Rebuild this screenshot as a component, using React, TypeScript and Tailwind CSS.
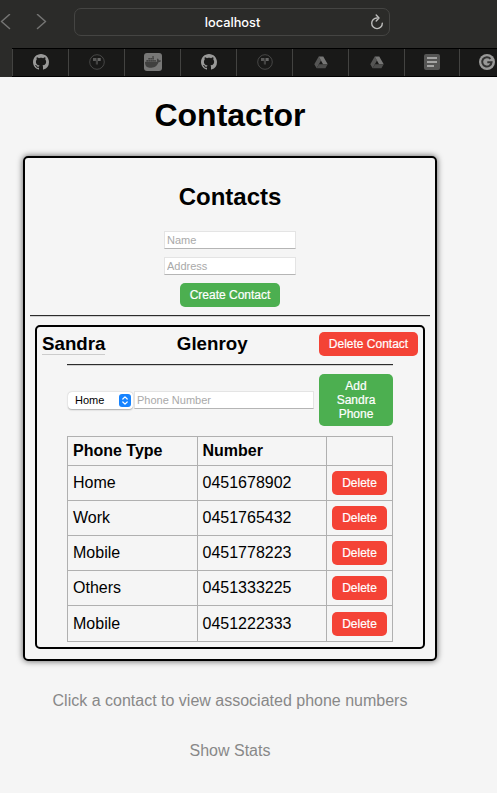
import React from "react";
import { SiDocker } from "react-icons/si";

const phones = [
  { type: "Home", number: "0451678902" },
  { type: "Work", number: "0451765432" },
  { type: "Mobile", number: "0451778223" },
  { type: "Others", number: "0451333225" },
  { type: "Mobile", number: "0451222333" },
];

function GithubIcon() {
  return (
    <svg width="16" height="16" viewBox="0 0 16 16" fill="#999998">
      <path d="M8 0C3.58 0 0 3.58 0 8c0 3.54 2.29 6.53 5.47 7.59.4.07.55-.17.55-.38 0-.19-.01-.82-.01-1.49-2.01.37-2.53-.49-2.69-.94-.09-.23-.48-.94-.82-1.13-.28-.15-.68-.52-.01-.53.63-.01 1.08.58 1.23.82.72 1.21 1.87.87 2.33.66.07-.52.28-.87.51-1.07-1.78-.2-3.64-.89-3.64-3.95 0-.87.31-1.59.82-2.15-.08-.2-.36-1.02.08-2.12 0 0 .67-.21 2.2.82.64-.18 1.32-.27 2-.27s1.36.09 2 .27c1.53-1.04 2.2-.82 2.2-.82.44 1.1.16 1.92.08 2.12.51.56.82 1.27.82 2.15 0 3.07-1.87 3.75-3.65 3.95.29.25.54.73.54 1.48 0 1.07-.01 1.93-.01 2.2 0 .21.15.46.55.38A8.01 8.01 0 0 0 16 8c0-4.42-3.58-8-8-8z" />
    </svg>
  );
}

function RingIcon() {
  return (
    <svg width="16" height="16" viewBox="0 0 16 16" fill="none">
      <circle cx="8" cy="8" r="7.300" stroke="#4c4c4b" strokeWidth="0.900" />
      <rect x="4" y="4" width="3.500" height="3" fill="#585857" />
      <rect x="8.500" y="4" width="3.200" height="3" fill="#666665" />
      <rect x="6.800" y="6" width="2.200" height="4.500" fill="#444443" />
    </svg>
  );
}

function DockerIcon() {
  return (
    <div className="flex h-[18px] w-[18px] items-center justify-center rounded-[3px] bg-[#777776]">
      <SiDocker size={16} color="#40403f" />
    </div>
  );
}

function DriveIcon() {
  return (
    <svg width="14" height="13" viewBox="0 0 14 13">
      <path d="M4.700 0.500L0.300 8.200L2.600 12.300L7 4.500z" fill="#555554" />
      <path d="M4.700 0.500H9.300L13.700 8.200H9.100z" fill="#777776" />
      <path d="M5 8.200H13.700L11.400 12.300H2.600z" fill="#4c4c4b" />
    </svg>
  );
}

function DocIcon() {
  return (
    <svg width="16" height="16" viewBox="0 0 16 16">
      <rect width="16" height="16" rx="2" fill="#555554" />
      <path d="M3 4h10M3 8h10M3 12h7" stroke="#a4a4a3" strokeWidth="1.800" />
    </svg>
  );
}

function GIcon() {
  return (
    <svg width="16" height="16" viewBox="0 0 16 16" fill="none">
      <circle cx="8" cy="8" r="8" fill="#999998" />
      <path d="M11.500 4.800A4.700 4.700 0 1 0 12.600 8.200H8.300" stroke="#333332" strokeWidth="2" />
    </svg>
  );
}

const tabs = [GithubIcon, RingIcon, DockerIcon, GithubIcon, RingIcon, DriveIcon, DriveIcon, DocIcon];

function Chevron({ d }: { d: string }) {
  return (
    <svg width="11" height="16" viewBox="0 0 11 16" fill="none" stroke="#747473" strokeWidth="1.500" strokeLinecap="round" strokeLinejoin="round">
      <path d={d} />
    </svg>
  );
}

function Browser() {
  return (
    <header className="h-[77px] bg-[#2b2b29]">
      <div className="flex h-12">
        <div className="flex w-[74px] gap-[25px] pt-[14px]">
          <Chevron d="M9.500 0.500L1.500 7.500l8 7" />
          <Chevron d="M1.500 0.500l8 7-8 7" />
        </div>
        <div className="mt-2 flex h-7 w-[316px] items-center rounded-[7px] border border-[#454543] pl-[20px] pr-[5px]">
          <span className="flex-1 pt-px text-center font-['Inter'] text-[12.800px] font-medium text-white">localhost</span>
          <svg width="14" height="16" viewBox="0 0 14 16" fill="none" stroke="#bdbdbc" strokeWidth="1.400" strokeLinecap="round" strokeLinejoin="round">
            <path d="M7 4A5.300 5.300 0 1 0 12.300 9.200M6.200 1L9 4L6.200 7" />
          </svg>
        </div>
      </div>
      <div className="ml-3 flex h-[29px] overflow-hidden border-y border-black bg-[#191918]">
        {tabs.map((Icon, i) => (
          <div key={i} className={`flex shrink-0 items-center justify-center border-l border-[#434341] pb-px ${i === 7 ? "w-[55px]" : "w-14"}`}>
            <Icon />
          </div>
        ))}
        <div className="flex w-[54px] shrink-0 items-center justify-center border-l border-[#434341] pb-px">
          <GIcon />
        </div>
      </div>
    </header>
  );
}

const field = "block h-[18px] border border-[#e4e4e4] border-b-[#b5b5b5] bg-white pl-[2px] text-[11px] leading-none placeholder:text-[#a9a9a9] outline-none";
const red = "h-6 rounded-[5px] bg-[#f44336] text-center text-[12px] leading-6 text-white [-webkit-text-stroke:0.2px_white]";

export default function App() {
  return (
    <div className="h-[793px] w-[497px] overflow-hidden bg-[#f5f5f5] font-['Liberation_Sans',Arial,sans-serif] text-black">
      <Browser />
      <main className="w-[460px] pt-5">
        <h1 className="h-[37px] text-center text-[32px] leading-[37px] font-bold">Contactor</h1>
        <section className="mt-[22px] ml-[23px] h-[505px] w-[414px] rounded-[5px] border-2 border-black px-[5px] pt-[25px] shadow-[0_0_6px_rgba(0,0,0,0.65)]">
          <h2 className="h-7 text-center text-[24px] leading-7 font-bold">Contacts</h2>
          <form className="mt-5 flex flex-col items-center gap-2">
            <input className={`${field} w-[132px]`} placeholder="Name" />
            <input className={`${field} w-[132px]`} placeholder="Address" />
            <button type="button" className="h-6 w-[100px] rounded-[5px] bg-[#4caf50] text-[12px] leading-6 text-white [-webkit-text-stroke:0.2px_white]">Create Contact</button>
          </form>
          <hr className="mt-2 h-[2px] border-t border-b border-t-[#2c2c2c] border-b-[#d0d0d0]" />
          <article className="mt-2 ml-[5px] h-[324px] w-[390px] rounded-[5px] border-2 border-black p-[5px]">
            <div className="flex h-6 items-start justify-between text-[18.720px] leading-6 font-bold">
              <div className="h-[23px] border-b border-[#cccccc]">Sandra</div>
              <div>Glenroy</div>
              <button className={`${red} w-[99px] font-normal`}>Delete Contact</button>
            </div>
            <div className="ml-[25px] w-[326px]">
              <hr className="mt-2 h-[2px] border-t border-b border-t-[#2c2c2c] border-b-[#d0d0d0]" />
              <form className="mt-2 flex h-[52px] items-center">
                <div className="ml-px flex h-[17px] w-[65px] items-center justify-between rounded-[4px] bg-white pr-[2px] pl-[7px] text-[11px] shadow-[0_0.5px_1.5px_rgba(0,0,0,0.3)]">
                  <span>Home</span>
                  <svg width="12" height="13" viewBox="0 0 12 13" fill="none">
                    <rect width="12" height="13" rx="3" fill="#1683ff" />
                    <path d="M3.800 5L6 2.800L8.200 5M3.800 8L6 10.200L8.200 8" stroke="white" strokeWidth="1.200" strokeLinecap="round" strokeLinejoin="round" />
                  </svg>
                </div>
                <input className={`${field} ml-px w-[180px]`} placeholder="Phone Number" />
                <button type="button" className="ml-[5px] h-[52px] w-[74px] rounded-[5px] bg-[#4caf50] px-3 text-[12px] leading-[14px] text-white [-webkit-text-stroke:0.2px_white]">Add Sandra Phone</button>
              </form>
              <div className="mt-[10px] border-t border-l border-[#b0b0b0] text-[16px]">
                <div className="grid h-[29px] grid-cols-[130px_129px_66px] font-bold leading-7">
                  <div className="border-r border-b border-[#b0b0b0] pl-[5px]">Phone Type</div>
                  <div className="border-r border-b border-[#b0b0b0] pl-[4.500px]">Number</div>
                  <div className="border-r border-b border-[#b0b0b0]" />
                </div>
                {phones.map((p, i) => (
                  <div key={i} className={`grid grid-cols-[130px_129px_66px] ${i === 4 ? "h-9 leading-[35px]" : "h-[35px] leading-[34px]"}`}>
                    <div className="border-r border-b border-[#b0b0b0] pl-[5px]">{p.type}</div>
                    <div className="border-r border-b border-[#b0b0b0] pl-[4.500px]">{p.number}</div>
                    <div className={`flex border-r border-b border-[#b0b0b0] pl-[5px] ${i === 4 ? "pt-[6px]" : "pt-[5px]"}`}>
                      <button className={`${red} w-[55px]`}>Delete</button>
                    </div>
                  </div>
                ))}
              </div>
            </div>
          </article>
        </section>
        <p className="mt-[31px] text-center text-[16px] leading-[18px] text-[#888888]">Click a contact to view associated phone numbers</p>
        <p className="mt-8 text-center text-[16px] leading-[18px] text-[#888888]">Show Stats</p>
      </main>
    </div>
  );
}
